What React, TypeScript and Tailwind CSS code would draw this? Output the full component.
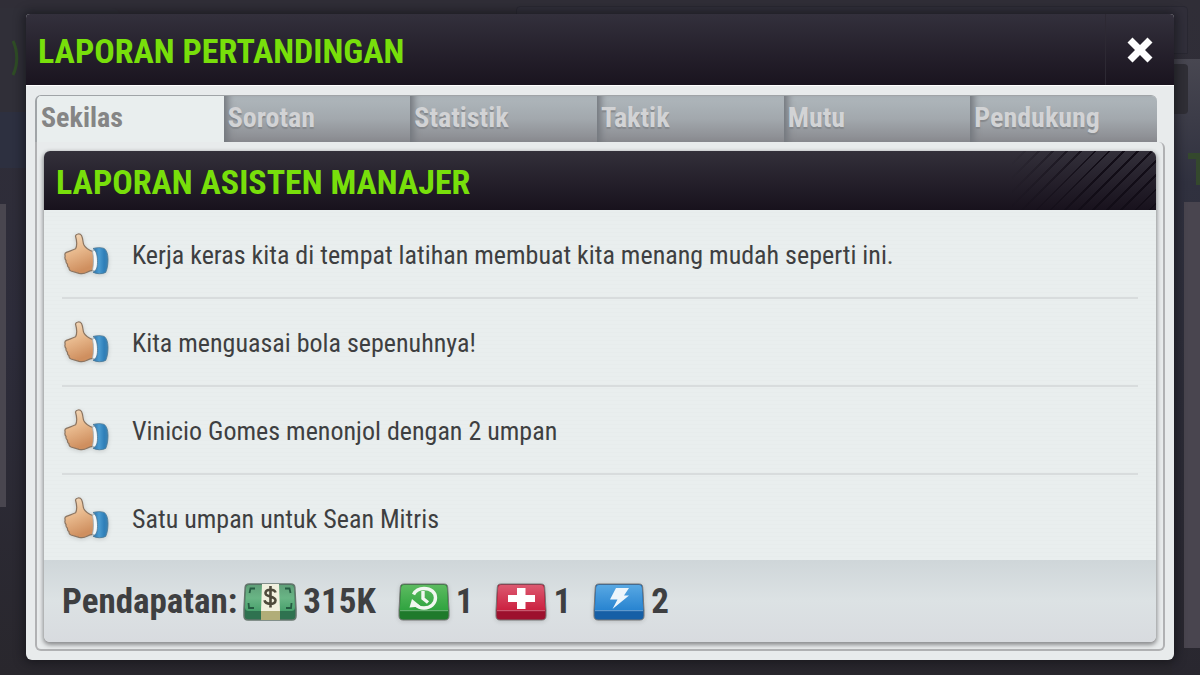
import { useState } from "react";

const tabs = ["Sekilas", "Sorotan", "Statistik", "Taktik", "Mutu", "Pendukung"];

const reports = [
  "Kerja keras kita di tempat latihan membuat kita menang mudah seperti ini.",
  "Kita menguasai bola sepenuhnya!",
  "Vinicio Gomes menonjol dengan 2 umpan",
  "Satu umpan untuk Sean Mitris",
];

function ThumbIcon() {
  return (
    <svg viewBox="0 0 46 44" className="h-11 w-[46px] shrink-0 drop-shadow-sm" aria-hidden="true">
      <defs>
        <linearGradient id="skin" x1="0" y1="0" x2="0.3" y2="1">
          <stop offset="0" stopColor="#f3dcc0" />
          <stop offset="0.5" stopColor="#e8b98d" />
          <stop offset="1" stopColor="#cf8f5f" />
        </linearGradient>
        <linearGradient id="sleeve" x1="0" y1="0" x2="1" y2="0">
          <stop offset="0" stopColor="#2a6fa8" />
          <stop offset="0.4" stopColor="#4a9bd0" />
          <stop offset="0.75" stopColor="#2f7fb9" />
          <stop offset="1" stopColor="#3f82b0" />
        </linearGradient>
      </defs>
      <path
        d="M11.500 3C12 .8 16 0 17.500 2.500c1.500 3 1.200 6 2.200 9 1.500 3.500 5 5.700 10.300 7.500l-.5 18.500c-2.500-.3-4.500.7-6.500 1.800-2.500 1.400-5.500 1.500-8 1L7 38c-1.600-.6-2.200-2-2-3.300-1.200-.9-1.800-2.300-1.500-3.500-1.300-1-1.800-2.400-1.400-3.600C1 26.300.6 24.500 1.200 23c-.6-1.500-.2-3 1.200-3.600 3-1.200 6-2.200 9.200-3.600 1.600-3 1.100-8.500-.1-12.800z"
        fill="url(#skin)"
        stroke="#8c7561"
        strokeWidth="1.200"
      />
      <path d="M28.500 18l6-2v23l-6-1.500c1.200-6 1.200-13 0-19.500z" fill="#f4f7f8" stroke="#9fadb4" strokeWidth="0.800" />
      <path d="M29 15.500c4-1.100 8-1.200 11.300 0 2.200 1.700 3.600 5.400 3.700 10.400.1 5-.6 9.500-2.300 13.500-3.700 1.900-9 1.700-12.700-.2 2.700-1 4.400-4 4.500-9.500.1-6.300-.9-11.900-4.500-14.200z" fill="url(#sleeve)" stroke="#4a7896" strokeWidth="0.800" />
    </svg>
  );
}

function MoneyIcon() {
  return (
    <svg viewBox="0 0 54 40" className="h-10 w-[54px]" aria-hidden="true">
      <defs>
        <linearGradient id="cash" x1="0" y1="0" x2="0" y2="1">
          <stop offset="0" stopColor="#5f9f78" />
          <stop offset="0.5" stopColor="#69b585" />
          <stop offset="1" stopColor="#48a06c" />
        </linearGradient>
      </defs>
      <path d="M6 2h42c2.500 0 3.500 1 3.800 3L53 27v7c0 2.500-1.500 4-4 4H5c-2.500 0-4-1.500-4-4v-7L2.200 5C2.500 3 3.500 2 6 2z" fill="#2f7250" stroke="#66766d" strokeWidth="1.500" />
      <path d="M6 3h42c2 0 2.800 1 3 3l1 19c.1 2.500-1 4-3.500 4h-43C3 29 1.900 27.500 2 25L3 6c.2-2 1-3 3-3z" fill="url(#cash)" />
      <path d="M19 2h17l1 27H18z" fill="#f1f0de" />
      <path d="M18 29h19v9H18z" fill="#b1ad78" />
      <path d="M12 6.500H7.500l-1 4.500M42 6.500h4.500l1 4.500M5.500 21l.5 5h5M48.500 21l-.5 5h-5" fill="none" stroke="#245b41" strokeWidth="1.800" />
      <path d="M32.500 10.500c-.7-3.500-9.300-4-10 .2-.7 4.800 10 3 10 7.800 0 4.500-10 4.500-11-.2M27.500 4v21.500" fill="none" stroke="#4e4a3b" strokeWidth="2.600" />
    </svg>
  );
}

function PackIcon({ kind }: { kind: "rest" | "health" | "energy" }) {
  const colors = {
    rest: ["#5cbb60", "#2fa33f", "#1f7a2b"],
    health: ["#dc5970", "#cb203f", "#9d112e"],
    energy: ["#58a8e3", "#2783d0", "#165fa6"],
  }[kind];

  return (
    <svg viewBox="0 0 52 40" className="h-10 w-[52px] drop-shadow-sm" aria-hidden="true">
      <defs>
        <linearGradient id={kind} x1="0" y1="0" x2="0" y2="1">
          <stop offset="0" stopColor={colors[0]} />
          <stop offset="1" stopColor={colors[1]} />
        </linearGradient>
      </defs>
      <path d="M6 2h40c2.500 0 3.400 1 3.700 3L51 28v6c0 2.500-1.500 4-4 4H5c-2.500 0-4-1.500-4-4v-6L2.300 5C2.600 3 3.500 2 6 2z" fill={colors[2]} stroke="#777" strokeWidth="1" />
      <path d="M6 3h40c2 0 2.700 1 2.900 3l1.300 22.500H1.800L3.100 6C3.300 4 4 3 6 3z" fill={`url(#${kind})`} />
      <path d="M2 28.700h48" stroke="#fff" strokeOpacity="0.35" />
      {kind === "rest" && (
        <g fill="none" stroke="#f1f7f0">
          <path d="M15.500 12.500C17.500 8.500 21 6.500 26 6.500c7 0 11.500 4 11.500 9.300 0 5.700-4.700 10.200-11.500 10.200-3.800 0-6.500-1.300-8.800-3.500" strokeWidth="3.400" />
          <path d="M11.500 25.500l2.500-8.500 9 7.500z" fill="#f1f7f0" stroke="none" />
          <path d="M25 9v7.500l5 4" strokeWidth="3.400" />
        </g>
      )}
      {kind === "health" && <path d="M22 6h8.500v7H40v7h-9.500v7H22v-7h-9v-7h9z" fill="#fff" />}
      {kind === "energy" && <path d="M23 6h13l-5 7.500h5L19.500 27l5-9.500H17z" fill="#edf5fb" />}
    </svg>
  );
}

function Backdrop() {
  return (
    <div className="absolute inset-0 overflow-hidden bg-linear-to-b from-[#302e37] via-[#2d2c3a] to-[#29272d]" aria-hidden="true">
      <div className="absolute top-2 -left-2 h-28 w-32 rounded-tr-lg bg-[#302f38]" />
      <div className="absolute top-28 left-0 h-14 w-8 bg-[#2d3040]" />
      <svg viewBox="0 0 8 36" className="absolute top-10 left-3 h-9 w-2">
        <path d="M1 1c5 10 5 24 0 34" fill="none" stroke="#2f4d26" strokeWidth="3" />
      </svg>
      <div className="absolute top-[204px] left-0 h-[303px] w-1.5 bg-[#49464f]" />
      <div className="absolute top-1.5 right-3 left-[516px] h-12 rounded-t border border-[#292832] bg-[#312f3a]" />
      <div className="absolute top-[59px] right-0 bottom-0 w-7 bg-linear-to-b from-[#484751] via-[#30313f] via-20% to-[#29272f]" />
      <div className="absolute top-16 right-3 h-[50px] w-5 rounded-r bg-[#302f36]" />
      <div className="absolute top-[202px] right-0 h-[446px] w-4 bg-[#49454f]" />
      <div className="absolute top-[153px] -right-2 h-8 w-5 border-t-[6px] border-[#34482d]">
        <div className="ml-2 h-full w-2 bg-[#34482d]" />
      </div>
    </div>
  );
}

export default function App() {
  const [active, setActive] = useState("Sekilas");

  return (
    <div className="relative min-h-screen px-[26px] py-3.5 font-['Roboto_Condensed','Liberation_Sans',sans-serif] text-[#3e3f41]">
      <Backdrop />
      <main className="relative overflow-hidden rounded-t-sm rounded-b-md bg-[#e8ebec] shadow-[0_0_10px_3px_rgba(15,14,20,0.55)]">
        <header className="flex h-[71px] items-stretch justify-between bg-linear-to-b from-[#33303c] to-[#1a141f]">
          <h1 className="flex items-center pt-0.5 pl-3 text-[34px] leading-10 font-bold text-[#78df0b]">LAPORAN PERTANDINGAN</h1>
          <button type="button" aria-label="Tutup" className="flex w-[69px] items-center justify-center border-l border-[#2d2933]">
            <svg viewBox="0 0 28 28" className="h-7 w-7" aria-hidden="true">
              <path d="M6.500 1.500L14 9l7.500-7.500 5 5L19 14l7.500 7.500-5 5L14 19l-7.500 7.500-5-5L9 14 1.500 6.500z" fill="#fff" />
            </svg>
          </button>
        </header>

        <div className="border-t border-white p-[9px]">
          <nav className="mr-2 grid h-[47px] grid-cols-6 overflow-hidden rounded-t-md border-t border-l-2 border-[#a0a4a7]">
            {tabs.map((tab) => (
              <button
                key={tab}
                type="button"
                onClick={() => setActive(tab)}
                className={`pb-0.5 pl-1 text-left text-[28px] leading-8 font-bold ${
                  tab === active
                    ? "bg-[#e9eeee] text-[#858585]"
                    : "bg-linear-to-b from-[#afb7bc] via-[#a2a8ad] to-[#898a8f] text-[#d2d3d5] shadow-[inset_8px_0_7px_-4px_#74787e] [text-shadow:0_2px_1px_#85888c]"
                }`}
              >
                {tab}
              </button>
            ))}
          </nav>

          <div className="rounded-b-md rounded-tr-md border-2 border-t-0 border-[#b0b1b3] bg-[#e8ebec] p-[7px] pt-[9px]">
            <section className="overflow-hidden rounded-md bg-[#e9eeee] shadow-[0_2px_4px_1px_#8c8d8f]">
              <div className="flex h-[59px] items-stretch justify-between bg-linear-to-b from-[#33303a] to-[#18121d]">
                <h2 className="flex items-center pt-0.5 pl-3 text-[34px] leading-10 font-bold text-[#78df0b]">LAPORAN ASISTEN MANAJER</h2>
                <div className="w-36 bg-[repeating-linear-gradient(135deg,transparent_0_8px,#120d17_8px_10px)] mask-l-from-40%" />
              </div>

              <ul className="bg-[repeating-linear-gradient(0deg,#e9eeee_0_3px,#e7ecec_3px_4px)] px-[18px] pt-px">
                {reports.map((text) => (
                  <li key={text} className="flex h-[88px] items-center gap-[22px] border-b-2 border-[#d8dcdd] pt-0.5 pl-0.5 text-[26px] leading-9 last:h-[85px] last:border-b-0">
                    <ThumbIcon />
                    <span>{text}</span>
                  </li>
                ))}
              </ul>

              <footer className="flex h-[82px] items-center bg-linear-to-b from-[#cfd6d9] via-[#dce2e4] to-[#d8dbdf] pt-0.5 pl-[18px] text-[35px] leading-10 font-bold">
                <span className="mr-1.5">Pendapatan:</span>
                <div className="flex items-center gap-[22px]">
                  <span className="flex items-center gap-1.5"><MoneyIcon />315K</span>
                  <span className="flex items-center gap-1.5"><PackIcon kind="rest" />1</span>
                  <span className="flex items-center gap-1.5"><PackIcon kind="health" />1</span>
                  <span className="flex items-center gap-1.5"><PackIcon kind="energy" />2</span>
                </div>
              </footer>
            </section>
          </div>
        </div>
      </main>
    </div>
  );
}
